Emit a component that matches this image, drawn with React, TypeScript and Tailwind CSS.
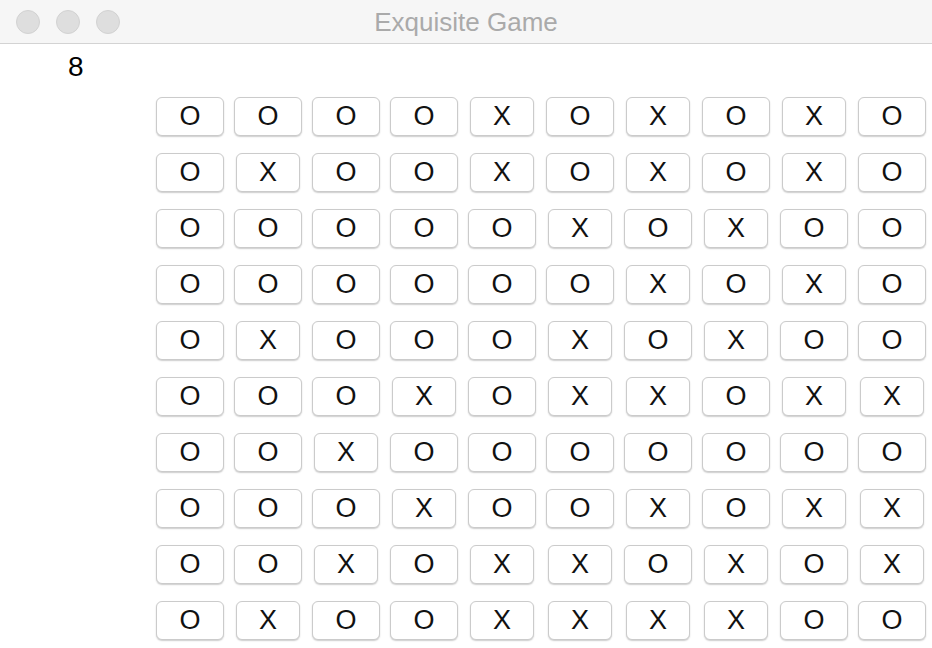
import React from "react";

const board: string[] = [
  "OOOOXOXOXO",
  "OXOOXOXOXO",
  "OOOOOXOXOO",
  "OOOOOOXOXO",
  "OXOOOXOXOO",
  "OOOXOXXOXX",
  "OOXOOOOOOO",
  "OOOXOOXOXX",
  "OOXOXXOXOX",
  "OXOOXXXXOO",
];

const Light: React.FC = () => (
  <div className="w-[24px] h-[24px] rounded-full bg-[#dedede] border border-[#d2d2d2]" />
);

const App: React.FC = () => {
  return (
    <div className="w-[932px] h-[648px] bg-white overflow-hidden font-['Liberation_Sans',Arial,sans-serif]">
      {/* title bar */}
      <div className="relative h-[44px] bg-[#f6f6f6] border-b border-[#d3d3d3] flex items-center justify-center">
        <div className="absolute left-[16px] top-[10px] flex gap-[16px]">
          <Light />
          <Light />
          <Light />
        </div>
        <span className="text-[26px] leading-none text-[#aaaaaa]">Exquisite Game</span>
      </div>

      <div className="pt-[7px]">
        <div className="pl-[68px] h-[32px] text-[28px] leading-[32px] text-black">8</div>
        <div className="ml-[151px] mt-[14px] grid grid-cols-[repeat(10,78px)] gap-y-[17px]">
          {board.map((row, r) =>
            row.split("").map((cell, c) => (
              <div key={`${r}-${c}`} className="flex justify-center">
                <button className="h-[39px] px-[22px] bg-white border border-[#cbcbcb] rounded-[6px] shadow-[0_1px_1.5px_rgba(0,0,0,0.2)] text-[27px] leading-none text-[#111111]">
                  {cell}
                </button>
              </div>
            ))
          )}
        </div>
      </div>
    </div>
  );
};

export default App;
